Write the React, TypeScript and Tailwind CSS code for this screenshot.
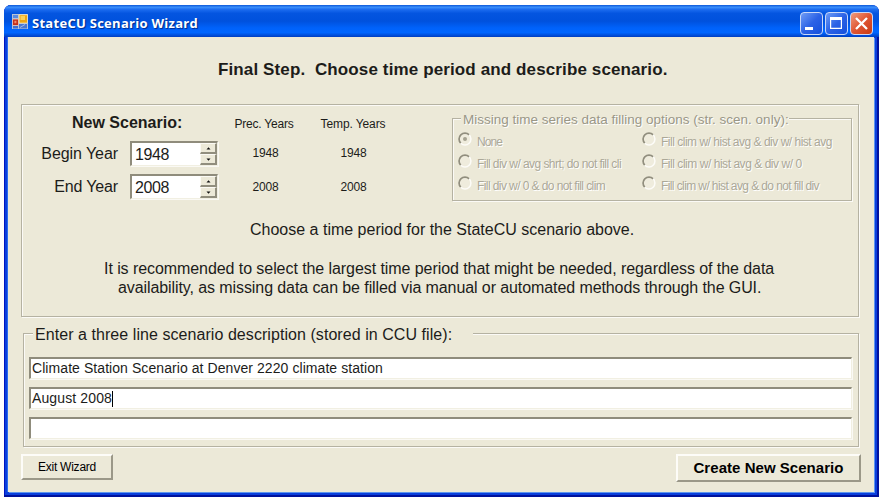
import type { ReactNode } from 'react';

const ETCHED = 'border border-[#b5b2a2] shadow-[1px_1px_0_#fbfaf6,inset_1px_1px_0_#fbfaf6]';
const SUNKEN =
  'border-t-2 border-l-2 border-r border-b border-t-[#8f8c7c] border-l-[#8f8c7c] border-r-[#f1efe2] border-b-[#f1efe2] bg-white shadow-[1px_1px_0_#faf9f4]';
const RAISED =
  'bg-[#ece9d8] border-t-2 border-l-2 border-r-2 border-b-2 border-t-[#fdfcf8] border-l-[#fdfcf8] border-r-[#9b9888] border-b-[#9b9888]';

function AppIcon() {
  return (
    <svg width="16" height="16" viewBox="0 0 16 16" className="mt-[2px] shrink-0">
      <rect x="0" y="0" width="16" height="15" fill="#b9c3d6" />
      <rect x="1" y="1" width="5" height="3" fill="#5b8be0" />
      <rect x="0.5" y="5" width="6" height="6.5" fill="#f3b6a0" />
      <rect x="1" y="5.5" width="5" height="5.5" fill="#c4301c" />
      <rect x="2.4" y="6.8" width="2" height="2.4" fill="#f08a6a" />
      <rect x="6.8" y="0.5" width="8.7" height="8.7" fill="#fff0b8" />
      <rect x="7.5" y="1.2" width="7.5" height="7.5" fill="#eda514" />
      <rect x="8.5" y="2" width="4.5" height="4" fill="#fbd25a" />
      <rect x="1" y="12" width="5" height="2.5" fill="#3f6fd0" />
      <rect x="7" y="10" width="8" height="4.5" fill="#4a78d2" />
      <path d="M8 13.5L13 10.5" stroke="#9db9ee" />
    </svg>
  );
}

function CaptionButton({ close = false, children }: { close?: boolean; children: ReactNode }) {
  return (
    <div
      className={`h-[23px] w-[23px] rounded-[4px] border border-[#c9d8f8] ${
        close
          ? 'bg-linear-to-br from-[#ee9a7c] via-[#df5532] to-[#c93a10]'
          : 'bg-linear-to-br from-[#6f9bf5] via-[#2c62e6] to-[#1450dc]'
      }`}
    >
      <svg width="21" height="21" viewBox="0 0 21 21">{children}</svg>
    </div>
  );
}

function Arrow({ down = false }: { down?: boolean }) {
  return (
    <div className="flex h-[11px] w-[17px] items-center justify-center border-t border-l border-r-2 border-b-2 border-t-[#fbfaf4] border-l-[#fbfaf4] border-r-[#918e7e] border-b-[#918e7e] bg-[#ece9d8]">
      <svg width="5" height="3" viewBox="0 0 5 3">
        <path d={down ? 'M0.5 0.5H4.5L2.5 2.8Z' : 'M0.5 2.5H4.5L2.5 0.2Z'} fill="#111" />
      </svg>
    </div>
  );
}

function Spinner({ value }: { value: string }) {
  return (
    <div className={`flex h-[25px] w-[88px] justify-between pl-[3px] ${SUNKEN}`}>
      <span className="text-[16px] leading-[23px] tracking-[-0.4px]">{value}</span>
      <div className="flex flex-col">
        <Arrow />
        <Arrow down />
      </div>
    </div>
  );
}

function Radio({ label, tracking, checked = false }: { label: string; tracking: string; checked?: boolean }) {
  return (
    <div className="flex h-[22px] items-start">
      <svg width="14" height="14" viewBox="0 0 14 14" className="shrink-0">
        <circle cx="7" cy="7" r="5.6" fill="#efecdd" />
        <path d="M2.8 11.2A5.9 5.9 0 0 1 11.2 2.8" fill="none" stroke="#918e7e" strokeWidth="1.7" />
        <path d="M11.2 2.8A5.9 5.9 0 0 1 2.8 11.2" fill="none" stroke="#fdfcf8" strokeWidth="1.5" />
        {checked && <circle cx="7" cy="7" r="2" fill="#a5a291" />}
      </svg>
      <span className={`ml-[5px] text-[12px] leading-[20px] text-[#aba898] [text-shadow:1px_1px_0_#fff] ${tracking}`}>
        {label}
      </span>
    </div>
  );
}

export default function App() {
  return (
    <div className="h-[500px] w-[882px] overflow-hidden bg-white pt-[5px] pl-[4px] font-['Liberation_Sans',Arial,sans-serif] whitespace-pre text-[#1c1c1a]">
      <div className="h-[492px] w-[875px] overflow-hidden rounded-t-[7px] bg-[#0a3fdc] shadow-[inset_-2px_-2px_0_#00129c,inset_1px_0_0_#0014c0]">
        <div className="flex h-[32px] items-center pr-[6px] pl-[8px] [background-image:linear-gradient(to_bottom,#0b57d8_0%,#3b8ffb_7%,#1c6cf0_14%,#0455e0_26%,#0051dd_50%,#0062fb_72%,#0066ff_86%,#0050dd_94%,#013ec0_100%)]">
          <AppIcon />
          <span className="mt-[4px] ml-[4px] font-['Open_Sans',sans-serif] text-[13px] leading-[20px] font-bold tracking-[0.28px] text-white [text-shadow:1px_1px_1px_#002a8a]">
            StateCU Scenario Wizard
          </span>
          <div className="mt-[4px] ml-auto flex gap-[2px]">
            <CaptionButton>
              <rect x="4" y="14" width="8" height="3" fill="#fff" />
            </CaptionButton>
            <CaptionButton>
              <path d="M4 4H16V16H4ZM5.2 7V14.8H14.8V7Z" fill="#fff" fillRule="evenodd" />
            </CaptionButton>
            <CaptionButton close>
              <path d="M5 5L16 16M16 5L5 16" stroke="#fff" strokeWidth="2.3" />
            </CaptionButton>
          </div>
        </div>

        <div className="ml-[4px] h-[455px] w-[866px] bg-[#ece9d8] shadow-[1px_1px_0_#5d95ee,-1px_0_0_#2a6cf0]">
          <h1 className="h-[67px] pl-[210px] text-[17px] leading-[66px] font-bold tracking-[0.12px]">
            {'Final Step.  Choose time period and describe scenario.'}
          </h1>

          <section className={`ml-[13px] h-[213px] w-[838px] ${ETCHED}`}>
            <div className="flex h-[106px]">
              <div className="w-[196px] pt-[7px]">
                <div className="pl-[50px] text-[16px] leading-[22px] font-bold">New Scenario:</div>
                <div className="mt-[7px] flex h-[25px] items-center justify-end">
                  <span className="mr-[12px] text-[16px] leading-[20px] tracking-[-0.07px]">Begin Year</span>
                  <Spinner value="1948" />
                </div>
                <div className="mt-[8px] flex h-[25px] items-center justify-end">
                  <span className="mr-[12px] text-[16px] leading-[20px] tracking-[-0.15px]">End Year</span>
                  <Spinner value="2008" />
                </div>
              </div>

              <div className="ml-[15px] w-[62px] pt-[9px] text-center text-[12px] leading-[20px]">
                <div className="tracking-[-0.23px]">Prec. Years</div>
                <div className="mt-[9px] pl-[3px] tracking-[-0.17px]">1948</div>
                <div className="mt-[14px] pl-[3px] tracking-[-0.17px]">2008</div>
              </div>
              <div className="ml-[23px] w-[70px] pt-[9px] text-center text-[12px] leading-[20px]">
                <div className="tracking-[-0.11px]">Temp. Years</div>
                <div className="mt-[9px] pl-[1px] tracking-[-0.17px]">1948</div>
                <div className="mt-[14px] pl-[1px] tracking-[-0.17px]">2008</div>
              </div>

              <div className={`mt-[13px] ml-[64px] h-[83px] w-[400px] ${ETCHED}`}>
                <div className="-mt-[9px] ml-[8px] h-[20px] w-fit bg-[#ece9d8] pl-[2px] text-[13.5px] leading-[20px] text-[#9a9787] [text-shadow:1px_1px_0_#fff]">
                  Missing time series data filling options (str. scen. only):
                </div>
                <div className="mt-[2px] flex pl-[5px]">
                  <div className="w-[184px]">
                    <Radio label="None" tracking="tracking-[-0.9px]" checked />
                    <Radio label="Fill div w/ avg shrt; do not fill cli" tracking="tracking-[-0.56px]" />
                    <Radio label="Fill div w/ 0 & do not fill clim" tracking="tracking-[-0.58px]" />
                  </div>
                  <div>
                    <Radio label="Fill clim w/ hist avg & div w/ hist avg" tracking="tracking-[-0.49px]" />
                    <Radio label="Fill clim w/ hist avg & div w/ 0" tracking="tracking-[-0.46px]" />
                    <Radio label="Fill clim w/ hist avg & do not fill div" tracking="tracking-[-0.6px]" />
                  </div>
                </div>
              </div>
            </div>

            <p className="mt-[9px] pl-[228px] text-[16px] leading-[20px]">
              Choose a time period for the StateCU scenario above.
            </p>
            <p className="mt-[19px] pl-[82px] text-[16px] leading-[19px] tracking-[-0.07px]">
              It is recommended to select the largest time period that might be needed, regardless of the data
            </p>
            <p className="pl-[96px] text-[16px] leading-[19px] tracking-[-0.09px]">
              availability, as missing data can be filled via manual or automated methods through the GUI.
            </p>
          </section>

          <section className={`mt-[16px] ml-[15px] h-[114px] w-[836px] ${ETCHED}`}>
            <div className="-mt-[9px] ml-[9px] h-[22px] w-[440px] bg-[#ece9d8] pl-[2px] text-[16px] leading-[20px] tracking-[0.06px]">
              Enter a three line scenario description (stored in CCU file):
            </div>
            <div className="ml-[5px] flex w-[823px] flex-col gap-[8px] pt-[10px] text-[14px] leading-[19px]">
              <div className={`h-[22px] pl-px tracking-[0.07px] ${SUNKEN}`}>
                Climate Station Scenario at Denver 2220 climate station
              </div>
              <div className={`flex h-[22px] pl-px tracking-[0.12px] ${SUNKEN}`}>
                August 2008
                <span className="mt-[2px] h-[16px] w-px bg-black" />
              </div>
              <div className={`h-[22px] ${SUNKEN}`} />
            </div>
          </section>

          <div className="mt-[7px] flex items-start justify-between pr-[13px] pl-[13px]">
            <button className={`h-[26px] w-[92px] text-[12px] leading-[21px] tracking-[-0.24px] text-black ${RAISED}`}>
              Exit Wizard
            </button>
            <button className={`h-[28px] w-[185px] text-[15px] leading-[24px] font-bold tracking-[0.04px] text-black ${RAISED}`}>
              Create New Scenario
            </button>
          </div>
        </div>
      </div>
    </div>
  );
}
